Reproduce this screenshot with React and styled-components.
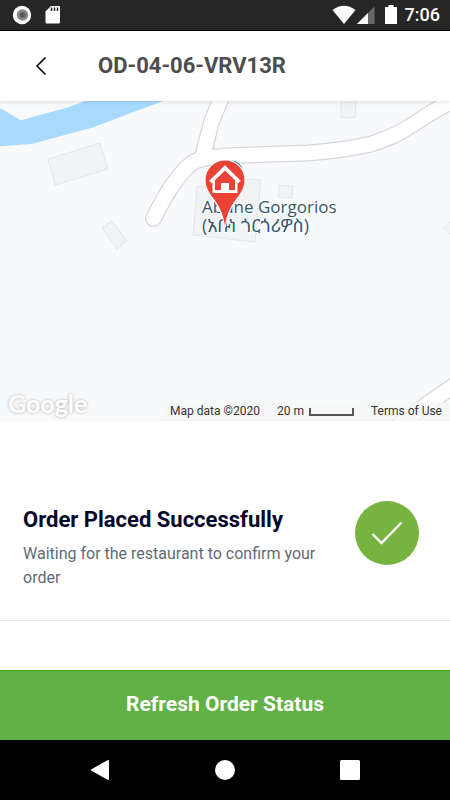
import React from "react";
import styled, { createGlobalStyle } from "styled-components";

const GlobalStyle = createGlobalStyle`
  * {
    box-sizing: border-box;
  }

  body {
    margin: 0;
    background-color: white;
    font-family: Roboto, "Liberation Sans", sans-serif;
  }

  h1, h2, p {
    margin: 0;
  }
`;

const Screen = styled.div`
  display: flex;
  flex-direction: column;
  min-height: 100vh;
`;

const StatusBar = styled.div`
  display: flex;
  align-items: center;
  justify-content: space-between;
  padding: 0 10px 0 12px;
  height: 31px;
  background-color: #262626;
  border-bottom: 1px solid black;
  color: white;
`;

const StatusGroup = styled.div`
  display: flex;
  align-items: center;
  gap: ${(props) => props.$gap}px;

  > svg {
    display: block;
  }
`;

const Clock = styled.span`
  font-size: 18px;
  font-weight: 500;
  line-height: 30px;
  margin-left: 4px;
`;

const Header = styled.header`
  display: flex;
  align-items: center;
  gap: 40px;
  height: 70px;
  padding: 0 24px;
  background-color: white;
  box-shadow: 0 1px 4px rgba(0, 0, 0, 0.12);
  z-index: 1;
`;

const IconButton = styled.button`
  display: flex;
  align-items: center;
  justify-content: center;
  width: 34px;
  height: 34px;
  padding: 0;
  border: none;
  background: none;
  cursor: pointer;
`;

const Title = styled.h1`
  color: #4d4d4d;
  font-size: 22px;
  font-weight: 700;
  line-height: 28px;
`;

const Map = styled.section`
  position: relative;
  height: 320px;
  overflow: hidden;
  background-color: #f8f9fb;
`;

const MapCanvas = styled.svg`
  display: block;
  width: 100%;
  height: 100%;
`;

const PlaceLabel = styled.div`
  position: absolute;
  left: calc(50% - 23px);
  top: 97px;
  color: #35586c;
  font-family: "Open Sans", "Noto Sans Ethiopic", sans-serif;
  font-size: 17px;
  line-height: 18px;
  white-space: nowrap;
  text-shadow: 0 0 2px white, 1px 1px 1px white, -1px -1px 1px white;
`;

const LocalName = styled.p`
  font-size: 18px;
`;

const Pin = styled.svg`
  position: absolute;
  left: calc(50% - 21px);
  top: 58px;
`;

const MapLogo = styled.span`
  position: absolute;
  left: 8px;
  bottom: 2px;
  color: white;
  font-family: Lato, sans-serif;
  font-size: 25px;
  font-weight: 700;
  line-height: 32px;
  text-shadow: 0 0 3px #aaa;
`;

const Attribution = styled.div`
  position: absolute;
  right: 0;
  bottom: 0;
  display: flex;
  gap: 1px;
`;

const AttributionItem = styled.span`
  display: flex;
  align-items: center;
  gap: 5px;
  height: 19px;
  padding: 0 8px;
  background-color: rgba(245, 245, 245, 0.75);
  color: #333;
  font-size: 12px;
  line-height: 19px;

  > a {
    color: inherit;
    text-decoration: none;
  }
`;

const ScaleBar = styled.span`
  width: 45px;
  height: 8px;
  border: 2px solid #555;
  border-top: none;
`;

const OrderStatus = styled.section`
  display: flex;
  align-items: center;
  justify-content: space-between;
  height: 200px;
  padding: 24px 31px 0 23px;
  border-bottom: 1px solid #e6e6e6;
`;

const StatusText = styled.div`
  width: 310px;
  padding-top: 30px;
`;

const StatusTitle = styled.h2`
  color: #05082b;
  font-size: 22px;
  font-weight: 700;
  line-height: 28px;
  margin-bottom: 8px;
`;

const StatusDetail = styled.p`
  color: #5f6c78;
  font-size: 16px;
  line-height: 24px;
`;

const RefreshButton = styled.button`
  height: 70px;
  width: 100%;
  margin-top: auto;
  padding: 0 0 4px;
  border: none;
  border-top: 1px solid #43a518;
  background-color: #61b146;
  color: white;
  font-family: inherit;
  font-size: 21px;
  font-weight: 700;
  cursor: pointer;
`;

const NavBar = styled.nav`
  display: flex;
  align-items: center;
  justify-content: center;
  gap: 91px;
  height: 60px;
  background-color: black;
`;

const buildings = [
  "48,58 100,42 108,68 55,84",
  "102,127 112,120 127,140 117,148",
  "197,85 218,87 220,76 261,79 255,141 193,134",
  "279,84 293,85 292,97 278,96",
  "341,-2 356,-2 355,17 341,17",
  "443,127 452,119 460,128 452,135",
];

const roads = [
  "M153.5 117.5C160 104 164 98 170 87.5C178 77 188 61 200 58.5C210 56 216 56 225 55L268 53.3L308 52C335 50 350 48 370 43.3C396 35 400 31 413 23.5L430 12.3L445 4L462 -4",
  "M202 58L211.5 21L220 0L226 -12",
  "M390 331L405 319.5L430 301L455 284L470 277",
];

const MapDrawing = () => (
  <MapCanvas viewBox="0 0 450 320" preserveAspectRatio="xMidYMid slice" aria-hidden="true">
    <path
      d="M0 7L20.7 19.3L66.7 6.7L85 0H163L91.7 26.7L31.7 43L0 45.3Z"
      fill="#a8d9ff"
    />
    {buildings.map((points) => (
      <polygon key={points} points={points} fill="#f1f2f4" stroke="#e4e5e8" />
    ))}
    <g fill="none" stroke="#d6d7dc" strokeWidth="17" strokeLinecap="round" strokeLinejoin="round">
      {roads.map((d) => (
        <path key={d} d={d} />
      ))}
    </g>
    <g fill="none" stroke="white" strokeWidth="14.5" strokeLinecap="round" strokeLinejoin="round">
      {roads.map((d) => (
        <path key={d} d={d} />
      ))}
    </g>
    <circle cx="232" cy="70" r="11" fill="#6d93aa" stroke="white" />
  </MapCanvas>
);

const HomePin = () => (
  <Pin width="42" height="70" viewBox="0 0 42 70" role="img" aria-label="Delivery address">
    <path
      d="M21 67.500C19.500 54 14 45 7.500 37C3.500 31 1.500 27 1.500 21A19.500 19.500 0 0 1 40.500 21C40.500 27 38.500 31 34.500 37C28 45 22.500 54 21 67.500Z"
      fill="#ea4335"
      stroke="white"
      strokeWidth="2"
      strokeLinejoin="round"
      paintOrder="stroke"
    />
    <path d="M6.500 23L21 9L35.500 23" fill="none" stroke="white" strokeWidth="3.800" />
    <path d="M8.500 22V34H33.500V22H31V31H25V24H17V31H11V22Z" fill="white" />
  </Pin>
);

const App = () => {
  return (
    <Screen>
      <GlobalStyle />

      <StatusBar>
        <StatusGroup $gap={13}>
          <svg width="20" height="20" viewBox="0 0 20 20">
            <circle cx="10" cy="10" r="9.200" fill="white" />
            <circle cx="10.500" cy="10" r="5.800" fill="#8a8a8a" />
            <circle cx="10.500" cy="10" r="3" fill="#5c5c5c" />
          </svg>
          <svg width="16" height="20" viewBox="0 0 16 20">
            <path d="M6 1H14Q15 1 15 2V17Q15 18.500 13.500 18.500H2Q.5 18.500 .5 17V6.500Z" fill="white" />
            <path d="M6.500 2.500V6M9.500 2.500V6M12.500 2.500V6" stroke="#262626" strokeWidth="1.500" />
          </svg>
        </StatusGroup>
        <StatusGroup $gap={1}>
          <svg width="24" height="20" viewBox="0 0 24 20">
            <path d="M12 19L.5 5Q12 -3.500 23.500 5Z" fill="white" />
          </svg>
          <svg width="18" height="20" viewBox="0 0 18 20">
            <path d="M0 19L17.500 1.500V19Z" fill="#686868" />
            <path d="M0 19L11 8V19Z" fill="white" />
          </svg>
          <svg width="24" height="20" viewBox="0 0 24 20">
            <path d="M12.500 0H17.500V2H21V19H9V2H12.500Z" fill="white" />
          </svg>
          <Clock>7:06</Clock>
        </StatusGroup>
      </StatusBar>

      <Header>
        <IconButton aria-label="Back">
          <svg width="12" height="20" viewBox="0 0 12 20">
            <path d="M10.500 1.500L2 10L10.500 18.500" fill="none" stroke="black" strokeWidth="1.600" />
          </svg>
        </IconButton>
        <Title>OD-04-06-VRV13R</Title>
      </Header>

      <Map aria-label="Delivery map">
        <MapDrawing />
        <PlaceLabel>
          <p>Abune Gorgorios</p>
          <LocalName lang="am">(አቡነ ጎርጎሪዎስ)</LocalName>
        </PlaceLabel>
        <HomePin />
        <MapLogo>Google</MapLogo>
        <Attribution>
          <AttributionItem>Map data ©2020</AttributionItem>
          <AttributionItem>
            20 m <ScaleBar />
          </AttributionItem>
          <AttributionItem>
            <a href="#terms">Terms of Use</a>
          </AttributionItem>
        </Attribution>
      </Map>

      <OrderStatus>
        <StatusText>
          <StatusTitle>Order Placed Successfully</StatusTitle>
          <StatusDetail>
            Waiting for the restaurant to confirm your order
          </StatusDetail>
        </StatusText>
        <svg width="64" height="64" viewBox="0 0 64 64" aria-hidden="true">
          <circle cx="32" cy="32" r="32" fill="#76b43f" />
          <path d="M17.500 33L26.500 42L46.500 21.500" fill="none" stroke="white" strokeWidth="2.400" />
        </svg>
      </OrderStatus>

      <RefreshButton>Refresh Order Status</RefreshButton>

      <NavBar>
        <IconButton aria-label="System back">
          <svg width="20" height="20" viewBox="0 0 20 20">
            <path d="M18 1V19L2 10Z" fill="white" stroke="white" strokeWidth="2" strokeLinejoin="round" />
          </svg>
        </IconButton>
        <IconButton aria-label="Home">
          <svg width="20" height="20" viewBox="0 0 20 20">
            <circle cx="10" cy="10" r="10" fill="white" />
          </svg>
        </IconButton>
        <IconButton aria-label="Recent apps">
          <svg width="20" height="20" viewBox="0 0 20 20">
            <rect width="20" height="20" rx="1.500" fill="white" />
          </svg>
        </IconButton>
      </NavBar>
    </Screen>
  );
};

export default App;
